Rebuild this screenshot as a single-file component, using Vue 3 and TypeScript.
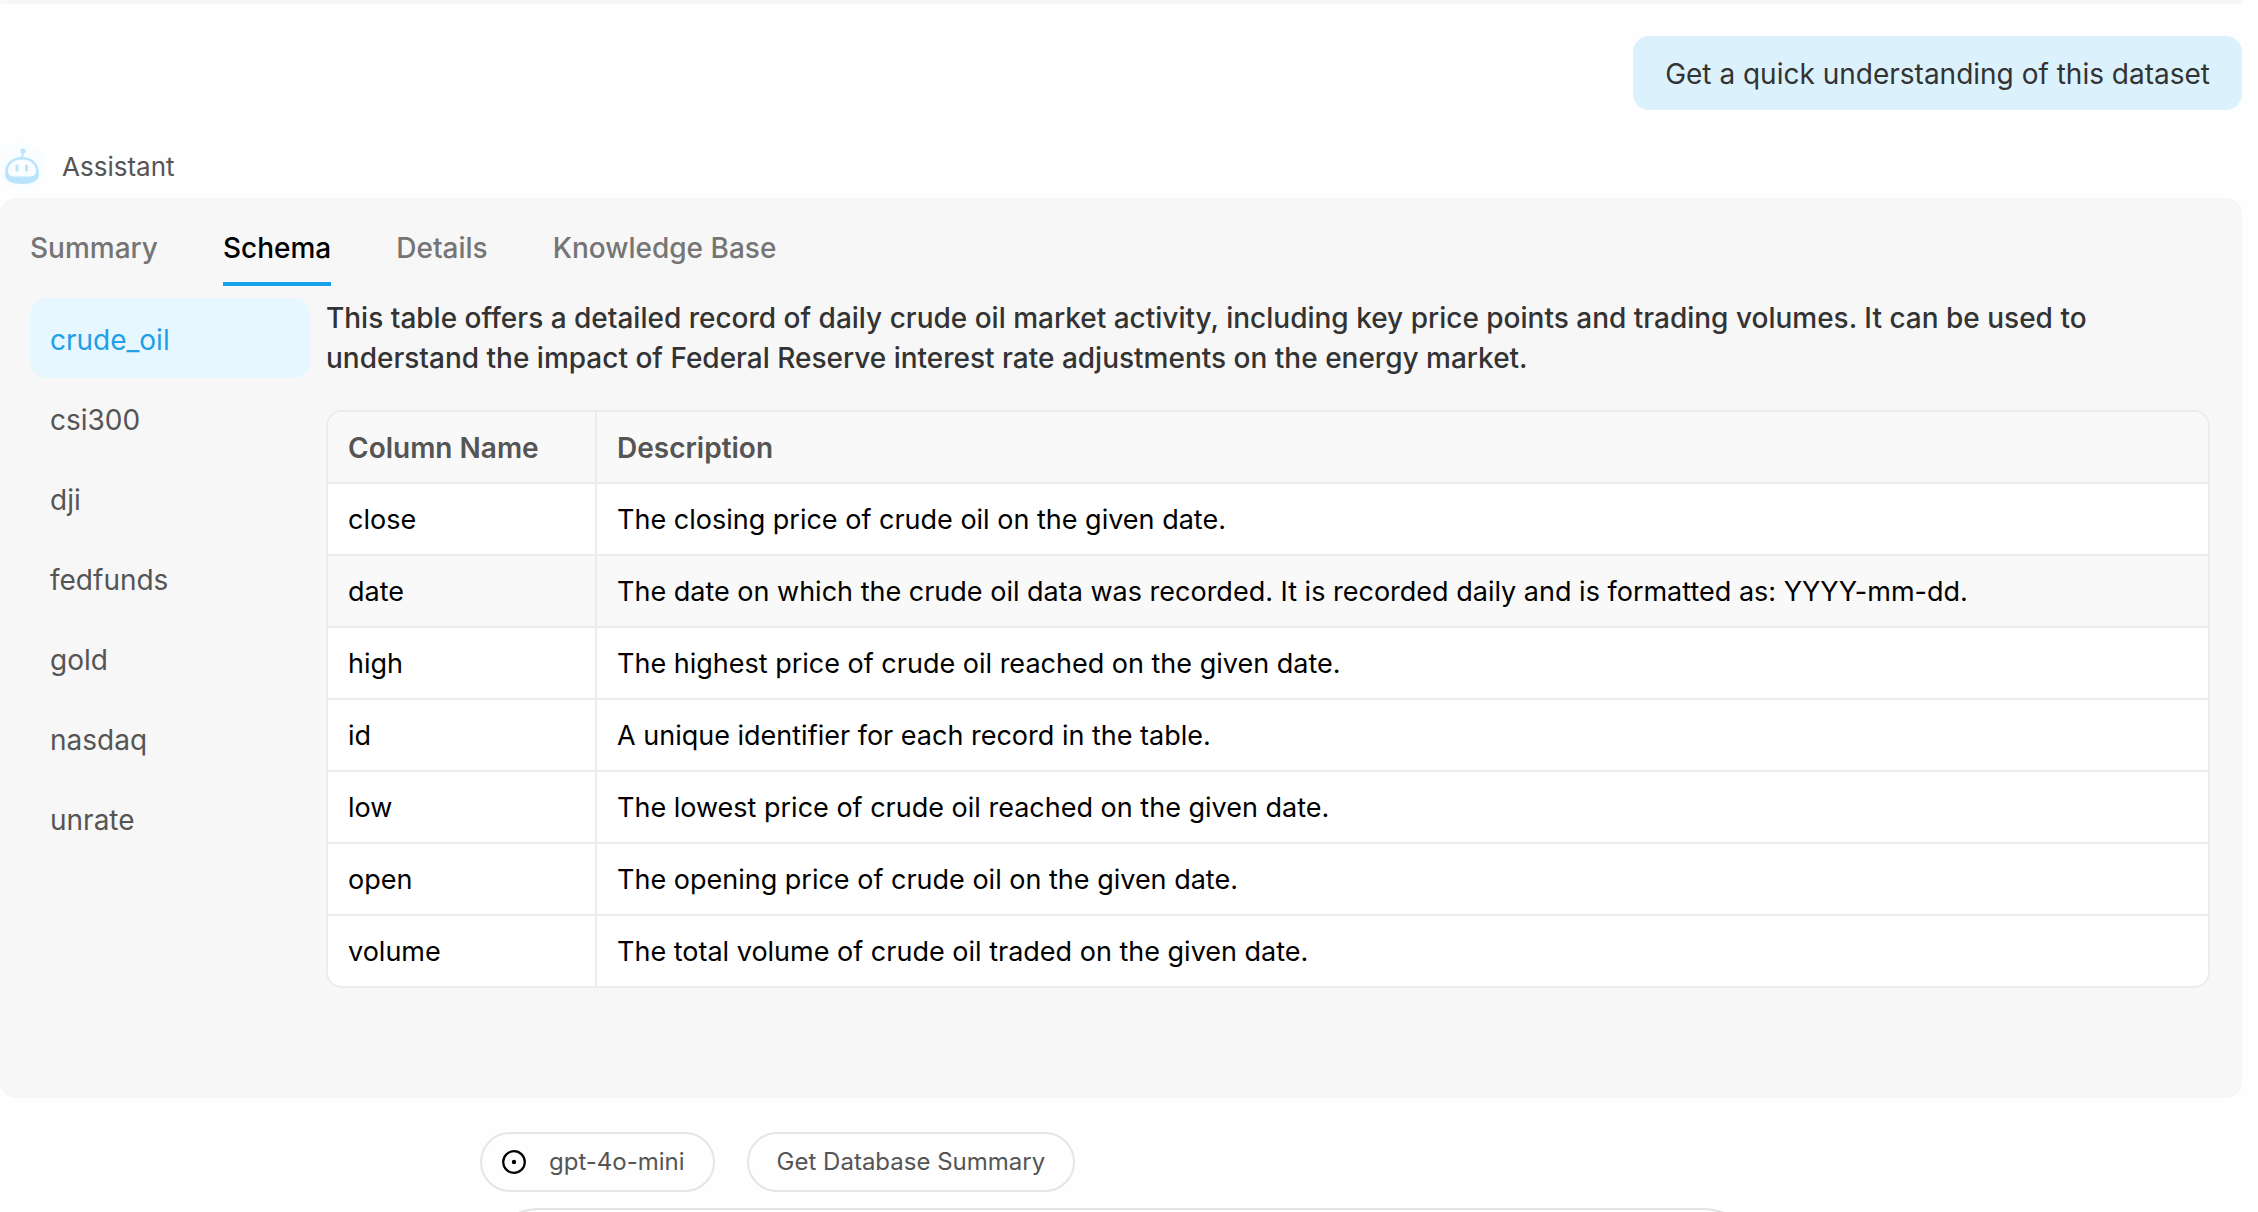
<script setup lang="ts">
import { ref } from 'vue'

interface Column {
  name: string
  description: string
}

const tabs: string[] = ['Summary', 'Schema', 'Details', 'Knowledge Base']
const activeTab = ref<string>('Schema')

const tables: string[] = ['crude_oil', 'csi300', 'dji', 'fedfunds', 'gold', 'nasdaq', 'unrate']
const activeTable = ref<string>('crude_oil')

const highlighted = ref<string>('date')

const columns: Column[] = [
  { name: 'close', description: 'The closing price of crude oil on the given date.' },
  {
    name: 'date',
    description:
      'The date on which the crude oil data was recorded. It is recorded daily and is formatted as: YYYY-mm-dd.',
  },
  { name: 'high', description: 'The highest price of crude oil reached on the given date.' },
  { name: 'id', description: 'A unique identifier for each record in the table.' },
  { name: 'low', description: 'The lowest price of crude oil reached on the given date.' },
  { name: 'open', description: 'The opening price of crude oil on the given date.' },
  { name: 'volume', description: 'The total volume of crude oil traded on the given date.' },
]
</script>

<template>
  <div class="chat">
    <main class="thread">
      <div class="previous" aria-hidden="true"></div>

      <div class="user-row">
        <p class="bubble">Get a quick understanding of this dataset</p>
      </div>

      <div class="author">
        <svg class="avatar" viewBox="0 0 48 48" aria-hidden="true">
          <circle cx="22" cy="24" r="24" fill="#fafdff" />
          <path d="M22 15 L23 9" stroke="#b9e4fb" stroke-width="2" fill="none" />
          <circle cx="23" cy="8" r="2.6" fill="#b9e4fb" />
          <path
            fill="#b9e4fb"
            fill-rule="evenodd"
            d="M22 14C31 14 39 19 39 31C39 38 32 41 22 41C12 41 5 38 5 31C5 19 13 14 22 14ZM22 16.500C14 16.500 8 21 8 28C8 32 11 33.500 15 33.500H29C33 33.500 36 32 36 28C36 21 30 16.500 22 16.500Z"
          />
          <rect x="15.500" y="21.500" width="3" height="7" rx="1.500" fill="#b9e4fb" />
          <rect x="25" y="21.500" width="3" height="7" rx="1.500" fill="#b9e4fb" />
        </svg>
        <span>Assistant</span>
      </div>

      <section class="card">
        <nav class="tabs">
          <button
            v-for="tab in tabs"
            :key="tab"
            type="button"
            class="tab"
            :class="{ active: tab === activeTab }"
            @click="activeTab = tab"
          >
            {{ tab }}
          </button>
        </nav>

        <div class="schema">
          <div class="tables">
            <button
              v-for="table in tables"
              :key="table"
              type="button"
              class="table-item"
              :class="{ active: table === activeTable }"
              @click="activeTable = table"
            >
              {{ table }}
            </button>
          </div>

          <div class="detail">
            <p class="intro">
              This table offers a detailed record of daily crude oil market activity, including key price points and
              trading volumes. It can be used to understand the impact of Federal Reserve interest rate adjustments on
              the energy market.
            </p>
            <table class="columns">
              <thead>
                <tr>
                  <th scope="col" class="name">Column Name</th>
                  <th scope="col">Description</th>
                </tr>
              </thead>
              <tbody>
                <tr
                  v-for="column in columns"
                  :key="column.name"
                  :class="{ highlighted: column.name === highlighted }"
                  @mouseenter="highlighted = column.name"
                >
                  <td>{{ column.name }}</td>
                  <td>{{ column.description }}</td>
                </tr>
              </tbody>
            </table>
          </div>
        </div>
      </section>
    </main>

    <footer class="footer">
      <div class="actions">
        <button type="button" class="pill model">
          <svg class="dot" viewBox="0 0 24 24" aria-hidden="true">
            <circle cx="12" cy="12" r="10.800" fill="none" stroke="#000" stroke-width="2.200" />
            <circle cx="12" cy="12" r="2.200" fill="#000" />
          </svg>
          <span>gpt-4o-mini</span>
        </button>
        <button type="button" class="pill">Get Database Summary</button>
      </div>
      <textarea class="composer" aria-label="Message"></textarea>
    </footer>
  </div>
</template>

<style>
body {
  margin: 0;
  background: #fefefe;
}
</style>

<style scoped>
.chat {
  display: flex;
  flex-direction: column;
  height: 100vh;
  overflow: hidden;
  padding-right: 16px;
  box-sizing: border-box;
  font-family: Inter, 'Liberation Sans', sans-serif;
  font-size: 28px;
  line-height: 40px;
  color: #333;
}

.thread {
  flex: none;
}

.previous {
  height: 4px;
  background: #f7f7f7;
  border-radius: 0 0 16px 16px;
}

.user-row {
  display: flex;
  justify-content: flex-end;
  margin-top: 32px;
}

.bubble {
  margin: 0;
  padding: 18px 32px 16px;
  border-radius: 16px;
  background: #dbf1fc;
}

.author {
  display: flex;
  align-items: center;
  gap: 14px;
  height: 48px;
  margin: 33px 0 7px;
  font-size: 26px;
  color: #555;
}

.avatar {
  width: 48px;
  height: 48px;
}

.card {
  min-height: 900px;
  box-sizing: border-box;
  padding: 30px 32px 30px 30px;
  border-radius: 16px;
  background: #f7f7f7;
}

button {
  margin: 0;
  padding: 0;
  border: 0;
  background: none;
  font: inherit;
  color: inherit;
  cursor: pointer;
}

.tabs {
  display: flex;
  gap: 65px;
}

.tab {
  height: 58px;
  padding-bottom: 14px;
  border-bottom: 4px solid transparent;
  font-weight: 500;
  color: #757575;
}

.tab.active {
  border-bottom-color: #16a1ec;
  color: #000;
}

.schema {
  display: flex;
  gap: 16px;
  margin-top: 12px;
}

.tables {
  display: flex;
  flex: none;
  flex-direction: column;
  width: 280px;
}

.table-item {
  height: 80px;
  padding: 4px 20px 0;
  border-radius: 16px;
  text-align: left;
  color: #555;
}

.table-item.active {
  background: #e6f7ff;
  color: #1f9fe6;
}

.detail {
  flex: 1;
  min-width: 0;
}

.intro {
  max-width: 1800px;
  margin: 0 0 32px;
  font-weight: 450;
}

.columns {
  width: 100%;
  border: 2px solid #ececec;
  border-radius: 16px;
  border-spacing: 0;
  overflow: hidden;
  background: #fff;
  color: #000;
}

.columns th,
.columns td {
  box-sizing: border-box;
  height: 72px;
  padding: 2px 20px 0;
  border-bottom: 2px solid #ececec;
  text-align: left;
}

.columns td {
  font-size: 27px;
}

.columns th {
  background: #f9f9f9;
  font-weight: 600;
  color: #555;
}

.columns .name {
  width: 269px;
}

.columns tr > :first-child {
  border-right: 2px solid #ececec;
}

.columns .highlighted {
  background: #f9f9f9;
}

.columns tbody tr:last-child td {
  height: 70px;
  border-bottom: 0;
}

.footer {
  flex: none;
  width: 1282px;
  max-width: 100%;
  margin: 34px auto 0;
}

.actions {
  display: flex;
  gap: 32px;
  margin-bottom: 16px;
}

.pill {
  display: flex;
  align-items: center;
  gap: 23px;
  height: 60px;
  padding: 0 28px;
  border: 2px solid #e5e5e5;
  border-radius: 30px;
  font-size: 24px;
  color: #555;
}

.model {
  padding-left: 20px;
}

.dot {
  width: 24px;
  height: 24px;
  overflow: visible;
}

.composer {
  display: block;
  box-sizing: border-box;
  width: 100%;
  height: 120px;
  padding: 30px 40px;
  border: 2px solid #e2e2e2;
  border-radius: 60px;
  background: #fff;
  font: inherit;
  resize: none;
}
</style>
